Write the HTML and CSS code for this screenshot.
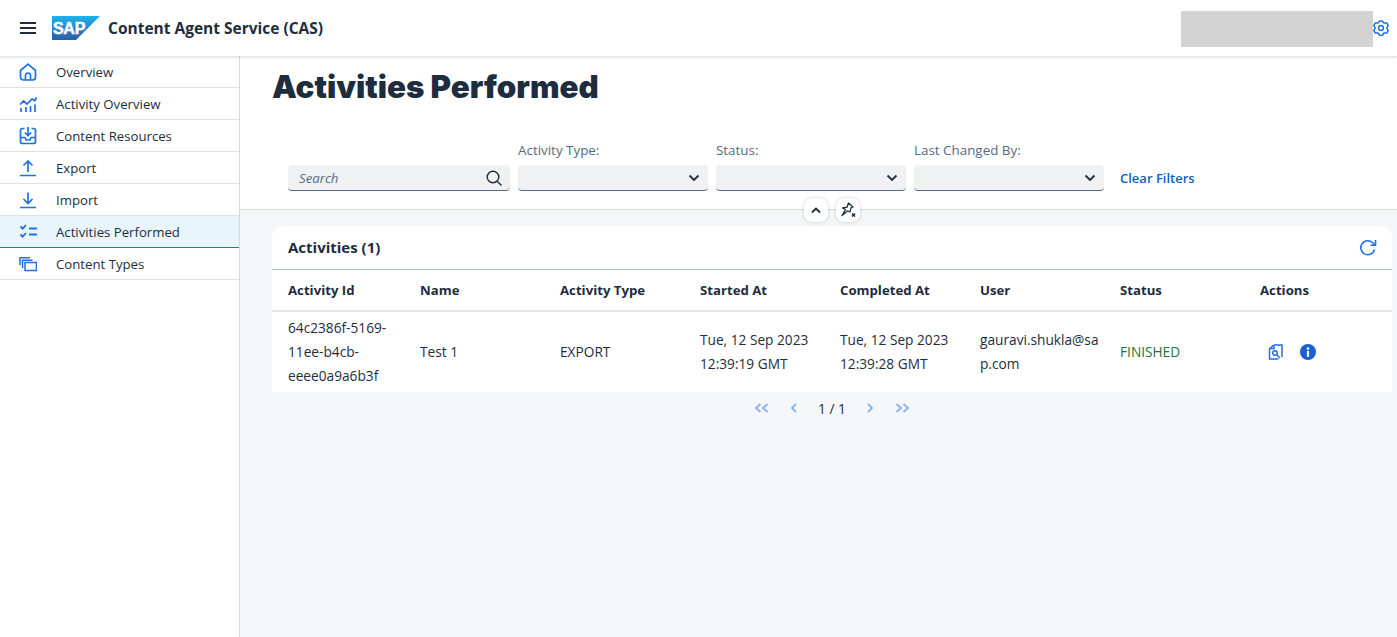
FILE: index.html
```html
<!DOCTYPE html>
<html lang="en">
<head>
  <meta charset="UTF-8" />
  <title>Content Agent Service (CAS)</title>
  <link rel="stylesheet" href="styles.css">
</head>
<body>
  <header class="shell">
    <button class="burger" aria-label="Menu">
      <svg width="16" height="12" viewBox="0 0 16 12"><path d="M0 1h16M0 6h16M0 11h16" stroke="#1d2d3e" stroke-width="2"/></svg>
    </button>
    <svg class="logo" width="48" height="24" viewBox="0 0 48 24">
      <defs>
        <linearGradient id="sapFill" x1="0" y1="0" x2="0" y2="1">
          <stop offset="0" stop-color="#1fb2ee"/>
          <stop offset="1" stop-color="#2d5da8"/>
        </linearGradient>
      </defs>
      <path d="M0 0h48L24 24H0z" fill="url(#sapFill)"/>
      <text x="1" y="18" class="logo-text">SAP</text>
    </svg>
    <span class="shell-title">Content Agent Service (CAS)</span>
    <div class="user-box"></div>
    <svg class="gear" width="16" height="16" viewBox="0 0 16 16" fill="none" stroke="#1b6fe0" stroke-width="1.500" stroke-linejoin="round">
      <path d="M6.680 1h2.640l1.580 2 2.920.110 1.320 2.290L13.800 8l1.340 2.600-1.320 2.290-2.920.130-1.580 2.460H6.680L5.100 13.020l-2.920-.130L.860 10.600 2.200 8 .860 5.400l1.320-2.290 2.920-.130z"/>
      <circle cx="8" cy="8" r="2.400"/>
    </svg>
  </header>

  <div class="page">
    <nav class="side">
      <a class="side-item">
        <svg width="18" height="18" viewBox="0 0 18 18" fill="none" stroke="#1f70e6" stroke-width="1.700" stroke-linejoin="round"><path d="M1.500 7.500L9 1.200l7.500 6.300V14a3 3 0 0 1-3 3h-9a3 3 0 0 1-3-3z"/><path d="M6.500 17v-4.500a2.500 2.500 0 0 1 5 0V17"/></svg>
        <span>Overview</span>
      </a>
      <a class="side-item">
        <svg width="18" height="18" viewBox="0 0 18 18" fill="none" stroke="#1f70e6" stroke-width="1.700"><path d="M1 9.500l3.500-3.500 3.500 3 5-5 3 1.500 1.500-3"/><path d="M2 13v4M7 12v5M11.500 11v6M16 9.500V17"/></svg>
        <span>Activity Overview</span>
      </a>
      <a class="side-item">
        <svg width="18" height="18" viewBox="0 0 18 18" fill="none" stroke="#1f70e6" stroke-width="1.700" stroke-linejoin="round"><path d="M5.500 1.500H3.500a2 2 0 0 0-2 2v11a2 2 0 0 0 2 2h11a2 2 0 0 0 2-2v-11a2 2 0 0 0-2-2h-2"/><path d="M9 0v8"/><path d="M5.800 5.500L9 8.700l3.200-3.200"/><path d="M1.500 10.500H6l1 2.500h4l1-2.500h4.500"/></svg>
        <span>Content Resources</span>
      </a>
      <a class="side-item">
        <svg width="18" height="18" viewBox="0 0 18 18" fill="none" stroke="#1f70e6" stroke-width="1.700"><path d="M1 16.500h16M9 13V2M4.500 6.500L9 2l4.500 4.500"/></svg>
        <span>Export</span>
      </a>
      <a class="side-item">
        <svg width="18" height="18" viewBox="0 0 18 18" fill="none" stroke="#1f70e6" stroke-width="1.700"><path d="M1 16.500h16M9 1.500v11M4.500 8L9 12.500 13.500 8"/></svg>
        <span>Import</span>
      </a>
      <a class="side-item side-item-on">
        <svg width="18" height="18" viewBox="0 0 18 18" fill="none" stroke="#1f70e6" stroke-width="1.800"><path d="M1.500 3.500L3.700 5.700 7 2M1.500 11.500L3.700 13.700 7 10M10 5.500h8M10 11.500h8"/></svg>
        <span>Activities Performed</span>
      </a>
      <a class="side-item">
        <svg width="18" height="18" viewBox="0 0 18 18" fill="none" stroke="#1f70e6" stroke-width="1.500"><path d="M6 7.500h11.500v8H6z"/><path d="M3.500 13V5.200h10M1 10V2.700h10"/></svg>
        <span>Content Types</span>
      </a>
    </nav>

    <main class="content">
      <section class="head">
        <h1 class="page-title">Activities Performed</h1>
        <div class="filters">
          <div class="field field-search">
            <div class="input">
              <span class="placeholder">Search</span>
              <svg width="16" height="16" viewBox="0 0 16 16" fill="none" stroke="#1d2d3e" stroke-width="1.400"><circle cx="7" cy="7" r="5.800"/><path d="M11.200 11.200L15.500 15.500"/></svg>
            </div>
          </div>
          <div class="field">
            <label>Activity Type:</label>
            <div class="input"><span></span><svg width="12" height="8" viewBox="0 0 12 8" fill="none" stroke="#1d2d3e" stroke-width="1.800"><path d="M1.500 1.500L6 6l4.500-4.500"/></svg></div>
          </div>
          <div class="field">
            <label>Status:</label>
            <div class="input"><span></span><svg width="12" height="8" viewBox="0 0 12 8" fill="none" stroke="#1d2d3e" stroke-width="1.800"><path d="M1.500 1.500L6 6l4.500-4.500"/></svg></div>
          </div>
          <div class="field">
            <label>Last Changed By:</label>
            <div class="input"><span></span><svg width="12" height="8" viewBox="0 0 12 8" fill="none" stroke="#1d2d3e" stroke-width="1.800"><path d="M1.500 1.500L6 6l4.500-4.500"/></svg></div>
          </div>
          <a class="clear">Clear Filters</a>
        </div>
        <div class="head-tools">
          <button class="round">
            <svg width="10" height="7" viewBox="0 0 10 7" fill="none" stroke="#1d2d3e" stroke-width="1.800"><path d="M1 5.500L5 1.500l4 4"/></svg>
          </button>
          <button class="round">
            <svg width="18" height="16" viewBox="0 0 18 16" fill="none" stroke="#1d2d3e" stroke-width="1.300" stroke-linejoin="round"><path d="M9.500 1l4.500 4-2 .8-1 4L8.500 9 3 13.500 6.500 7.500 3.500 6l4.500-.8z"/><path d="M13 11.500l3 3M16 11.500l-3 3" stroke-width="1.500"/></svg>
          </button>
        </div>
      </section>

      <section class="card">
        <div class="card-bar">
          <h2>Activities (1)</h2>
          <svg width="18" height="18" viewBox="0 0 18 18" fill="none" stroke="#1f70e6" stroke-width="1.600"><path d="M15.600 10.500A7 7 0 1 1 13.500 3.500L16 6"/><path d="M16.500 1v5.200h-5"/></svg>
        </div>
        <table class="grid">
          <thead>
            <tr>
              <th>Activity Id</th><th>Name</th><th>Activity Type</th><th>Started At</th>
              <th>Completed At</th><th>User</th><th>Status</th><th>Actions</th>
            </tr>
          </thead>
          <tbody>
            <tr>
              <td>64c2386f-5169-11ee-b4cb-eeee0a9a6b3f</td>
              <td>Test 1</td>
              <td>EXPORT</td>
              <td>Tue, 12 Sep 2023 12:39:19 GMT</td>
              <td>Tue, 12 Sep 2023 12:39:28 GMT</td>
              <td class="breaky">gauravi.shukla@sap.com</td>
              <td class="done">FINISHED</td>
              <td>
                <div class="actions">
                  <svg width="16" height="16" viewBox="0 0 16 16" fill="none" stroke="#1f70e6" stroke-width="1.500"><path d="M6 1h8v12M5.500 1L1.500 5v10h9"/><path d="M6 1v3.500H1.500"/><circle cx="7" cy="9" r="2.300"/><path d="M8.700 10.700L12 14"/></svg>
                  <svg width="16" height="16" viewBox="0 0 16 16"><circle cx="8" cy="8" r="8" fill="#1b5fd0"/><rect x="6.900" y="6.800" width="2.200" height="6" fill="#fff"/><circle cx="8" cy="4.500" r="1.300" fill="#fff"/></svg>
                </div>
              </td>
            </tr>
          </tbody>
        </table>
      </section>

      <div class="pager">
        <svg width="16" height="10" viewBox="0 0 16 10" fill="none" stroke="#8fb4ec" stroke-width="2"><path d="M6.500 1L2 5l4.500 4M13.500 1L9 5l4.500 4"/></svg>
        <svg width="8" height="10" viewBox="0 0 8 10" fill="none" stroke="#8fb4ec" stroke-width="2"><path d="M6 1L2 5l4 4"/></svg>
        <span class="pager-num">1 / 1</span>
        <svg width="8" height="10" viewBox="0 0 8 10" fill="none" stroke="#8fb4ec" stroke-width="2"><path d="M2 1l4 4-4 4"/></svg>
        <svg width="16" height="10" viewBox="0 0 16 10" fill="none" stroke="#8fb4ec" stroke-width="2"><path d="M2.500 1L7 5 2.500 9M9.500 1L14 5 9.500 9"/></svg>
      </div>
    </main>
  </div>
</body>
</html>
```

FILE: styles.css
```css
* {
  margin: 0;
  padding: 0;
  box-sizing: border-box;
}

html, body {
  height: 100%;
  overflow: hidden;
}

body {
  font-family: "Open Sans", "Noto Sans", sans-serif;
  font-size: 13.200px;
  color: #1d2d3e;
  background: #fff;
}

svg {
  display: block;
  flex: none;
}

button {
  background: none;
  border: none;
}

.shell {
  display: flex;
  align-items: center;
  height: 56px;
  padding: 0 8px 0 20px;
  background: #fff;
  box-shadow: 0 1px 3px rgba(50, 70, 100, 0.22);
  position: relative;
  z-index: 2;
}

.logo {
  margin-left: 16px;
}

.logo-text {
  font-family: "Liberation Sans", sans-serif;
  font-size: 16px;
  font-weight: bold;
  letter-spacing: -0.3px;
  fill: #fff;
  stroke: #fff;
  stroke-width: 0.5px;
}

.shell-title {
  margin-left: 8px;
  font-size: 15.500px;
  font-weight: 700;
}

.user-box {
  width: 192px;
  height: 36px;
  margin-top: 2px;
  margin-left: auto;
  background: #d3d3d3;
}

.page {
  display: flex;
  height: calc(100% - 56px);
}

.side {
  width: 240px;
  flex: none;
  background: #fff;
  border-right: 1px solid #d9d9d9;
}

.side-item {
  display: flex;
  align-items: center;
  gap: 19px;
  height: 32px;
  padding-left: 19px;
  border-bottom: 1px solid #e1e1e1;
}

.side-item-on {
  background: #e9f5fc;
  border-bottom-color: #2a6fd0;
}

.content {
  flex: 1;
  min-width: 0;
  background: #f5f6f7;
}

.head {
  height: 154px;
  padding: 11px 32px 0;
  background: #fff;
  border-bottom: 1px solid #d9d9d9;
  position: relative;
}

.page-title {
  font-family: "Inter", sans-serif;
  font-size: 31.300px;
  font-weight: 900;
  line-height: 40px;
}

.filters {
  display: flex;
  align-items: flex-end;
  gap: 8px;
  margin-top: 35px;
  padding-left: 16px;
}

.field {
  width: 190px;
}

.field-search {
  width: 222px;
}

.field label {
  display: block;
  height: 23px;
  line-height: 16px;
  font-size: 13.400px;
  color: #556b82;
}

.input {
  display: flex;
  align-items: center;
  justify-content: space-between;
  height: 26px;
  padding: 0 8px 0 11px;
  background: #eff1f2;
  border-bottom: 1px solid #556b82;
  border-radius: 4px;
}

.placeholder {
  font-style: italic;
  color: #556b82;
}

.clear {
  margin-left: 8px;
  line-height: 26px;
  font-size: 13px;
  font-weight: 600;
  color: #0a5fc4;
}

.head-tools {
  display: flex;
  gap: 8px;
  position: absolute;
  left: 564px;
  top: 142px;
}

.round {
  display: flex;
  align-items: center;
  justify-content: center;
  width: 24px;
  height: 24px;
  background: #fff;
  border-radius: 8px;
  box-shadow: 0 0 3px rgba(50, 70, 100, 0.3);
}

.card {
  margin: 16px 5px 0 32px;
  background: #fff;
  border-radius: 12px 12px 0 0;
}

.card-bar {
  display: flex;
  align-items: center;
  justify-content: space-between;
  height: 44px;
  padding: 0 15px 0 16px;
  border-bottom: 1px solid #a8b3bd;
}

.card-bar h2 {
  padding-bottom: 2px;
  font-size: 15px;
  font-weight: 700;
}

.grid {
  width: 100%;
  table-layout: fixed;
  border-collapse: collapse;
}

.grid th {
  height: 41px;
  padding: 0 8px;
  text-align: left;
  font-weight: 700;
  border-bottom: 2px solid #e5e5e5;
}

.grid td {
  padding: 4px 8px;
  font-size: 13.700px;
  line-height: 24px;
  overflow-wrap: anywhere;
}

.grid th:first-child,
.grid td:first-child {
  padding-left: 16px;
}

.done {
  color: #256f3a;
}

.breaky {
  word-break: break-all;
}

.actions {
  display: flex;
  gap: 16px;
  padding-left: 8px;
}

.pager {
  display: flex;
  align-items: center;
  justify-content: center;
  gap: 20px;
  height: 32px;
  margin-right: 5px;
  margin-left: 32px;
}

.pager-num {
  font-size: 13.700px;
}
```
